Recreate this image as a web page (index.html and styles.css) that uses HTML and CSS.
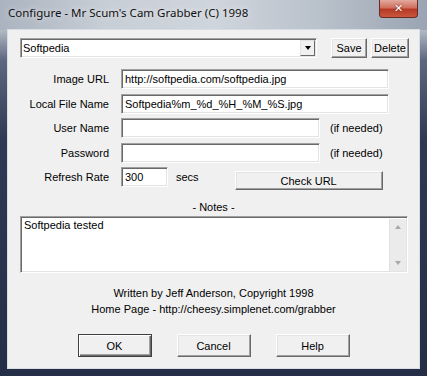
FILE: index.html
```html
<!DOCTYPE html>
<html lang="en">
<head>
    <meta charset="UTF-8">
    <title>Configure - Mr Scum's Cam Grabber (C) 1998</title>
    <link rel="stylesheet" href="styles.css">
</head>
<body>
    <div class="window">
        <!-- Title bar -->
        <div class="titlebar">
            <span class="title">Configure - Mr Scum's Cam Grabber (C) 1998</span>
            <span class="close-button">&#x2715;</span>
        </div>

        <div class="client">
            <!-- Profile selector -->
            <div class="combo-row">
                <div class="combo">
                    <span class="combo-text">Softpedia</span>
                    <span class="combo-drop"><span class="arrow-down"></span></span>
                </div>
                <button class="btn small save">Save</button>
                <button class="btn small delete">Delete</button>
            </div>

            <div class="form">
                <label class="label">Image URL</label>
                <div class="field-cell"><input class="field wide" type="text" value="http://softpedia.com/softpedia.jpg"></div>

                <label class="label">Local File Name</label>
                <div class="field-cell"><input class="field wide" type="text" value="Softpedia%m_%d_%H_%M_%S.jpg"></div>

                <label class="label">User Name</label>
                <div class="field-cell"><input class="field medium" type="text"><span class="hint">(if needed)</span></div>

                <label class="label">Password</label>
                <div class="field-cell"><input class="field medium" type="password"><span class="hint">(if needed)</span></div>

                <label class="label">Refresh Rate</label>
                <div class="field-cell">
                    <input class="field short" type="text" value="300">
                    <span class="secs">secs</span>
                    <button class="btn check">Check URL</button>
                </div>
            </div>

            <div class="notes-label">- Notes -</div>
            <div class="notes">
                <div class="notes-text">Softpedia tested</div>
                <div class="scrollbar">
                    <span class="arrow-up light"></span>
                    <span class="arrow-down light"></span>
                </div>
            </div>

            <div class="credits">
                <p>Written by Jeff Anderson, Copyright 1998</p>
                <p>Home Page - http://cheesy.simplenet.com/grabber</p>
            </div>

            <div class="actions">
                <button class="btn action default">OK</button>
                <button class="btn action">Cancel</button>
                <button class="btn action">Help</button>
            </div>
        </div>
    </div>
</body>
</html>
```

FILE: styles.css
```css
body {
    margin: 0;
    padding: 0;
    width: 427px;
    height: 376px;
    overflow: hidden;
    font-family: "Liberation Sans", Arial, sans-serif;
    font-size: 11px;
    color: black;
}
.window {
    width: 427px;
    height: 376px;
    display: flex;
    flex-direction: column;
    background: linear-gradient(180deg, #c3cad3 0, #b7bfc9 28px, #5d6780 60px, #2f3953 140px, #252e47 100%);
}
.titlebar {
    height: 30px;
    display: flex;
    align-items: flex-start;
    background: linear-gradient(90deg, #aab3bf 0, #c8ced6 25%, #cfd5dc 50%, #b9c1cb 75%, #9aa4b2 100%);
}
.title {
    font-family: "Noto Sans", sans-serif;
    font-size: 11.5px;
    margin: 5px 0 0 8px;
    color: #111;
    text-shadow: 0 0 6px rgba(255, 255, 255, 0.8);
}
.close-button {
    margin-left: auto;
    margin-right: 9px;
    width: 39px;
    height: 18px;
    border: 1px solid #6b2b24;
    border-top: none;
    border-radius: 0 0 4px 4px;
    background: linear-gradient(180deg, #e3a99e 0, #d0705f 45%, #b63a25 55%, #c9563d 100%);
    color: white;
    font-family: "DejaVu Sans", sans-serif;
    font-size: 11px;
    font-weight: bold;
    text-align: center;
    line-height: 17px;
    box-sizing: border-box;
    text-shadow: 0 0 2px #5a1a10;
}
.client {
    margin: 0 8px 8px 8px;
    flex: 1;
    background-color: #f0f0f0;
    box-shadow: 0 0 0 1px #d9dde3;
    display: flex;
    flex-direction: column;
}

/* sunken edit boxes */
.field, .combo, .notes {
    box-sizing: border-box;
    background: white;
    border: 1px solid;
    border-color: #a0a0a0 #ffffff #ffffff #a0a0a0;
    box-shadow: inset 1px 1px 0 #696969, inset -1px -1px 0 #e3e3e3;
}
.field {
    height: 20px;
    padding: 0 2px 0 3px;
    font-family: "Liberation Sans", Arial, sans-serif;
    font-size: 11px;
    outline: none;
}

/* raised buttons */
.btn {
    box-sizing: border-box;
    background: #f0f0f0;
    border: 1px solid;
    border-color: #ffffff #696969 #696969 #ffffff;
    box-shadow: inset -1px -1px 0 #a0a0a0, inset 1px 1px 0 #e3e3e3;
    font-family: "Liberation Sans", Arial, sans-serif;
    font-size: 11px;
    padding: 0;
    color: black;
}
.btn.default {
    border-color: #404040;
    box-shadow: inset 1px 1px 0 #ffffff, inset -1px -1px 0 #696969, inset -2px -2px 0 #a0a0a0;
}

.combo-row {
    display: flex;
    align-items: flex-start;
    margin: 8px 0 0 12px;
    height: 20px;
}
.combo {
    width: 297px;
    height: 20px;
    display: flex;
    align-items: center;
}
.combo-text {
    flex: 1;
    padding-left: 2px;
}
.combo-drop {
    width: 15px;
    height: 16px;
    margin-right: 1px;
    box-sizing: border-box;
    background: #f0f0f0;
    border: 1px solid;
    border-color: #e3e3e3 #696969 #696969 #e3e3e3;
    display: flex;
    align-items: center;
    justify-content: center;
}
.arrow-down, .arrow-up {
    width: 0;
    height: 0;
    border-left: 3.5px solid transparent;
    border-right: 3.5px solid transparent;
}
.arrow-down {
    border-top: 4px solid black;
}
.arrow-up {
    border-bottom: 4px solid black;
}
.arrow-down.light {
    border-top-color: #a8a8a8;
}
.arrow-up.light {
    border-bottom-color: #a8a8a8;
}
.btn.small {
    height: 20px;
}
.save {
    width: 36px;
    margin-left: 14px;
}
.delete {
    width: 38px;
    margin-left: 4px;
}

.form {
    display: grid;
    grid-template-columns: 101px 1fr;
    grid-auto-rows: 20px;
    column-gap: 12px;
    row-gap: 4.5px;
    margin-top: 11px;
}
.label {
    text-align: right;
    line-height: 20px;
}
.field-cell {
    display: flex;
    align-items: flex-start;
}
.wide {
    width: 268px;
}
.medium {
    width: 199px;
}
.short {
    width: 47px;
}
.hint {
    margin-left: 10px;
    line-height: 20px;
}
.secs {
    margin-left: 8px;
    line-height: 20px;
}
.btn.check {
    width: 148px;
    height: 19px;
    margin: 4px 0 0 36px;
}

.notes-label {
    text-align: center;
    line-height: 13px;
    margin-top: 14px;
}
.notes {
    margin: 2px 0 0 12px;
    width: 388px;
    height: 57px;
    display: flex;
}
.notes-text {
    flex: 1;
    padding: 2px 3px;
}
.scrollbar {
    width: 17px;
    margin: 2px 1px 1px 0;
    background: #ebebeb;
    border-left: 1px solid #e0e0e0;
    display: flex;
    flex-direction: column;
    align-items: center;
    justify-content: space-between;
    padding: 6px 0 6px 0;
    box-sizing: border-box;
}

.credits {
    margin-top: 12px;
    text-align: center;
}
.credits p {
    margin: 0;
    line-height: 16px;
}
.actions {
    display: flex;
    justify-content: center;
    gap: 25px;
    margin-top: 17px;
}
.btn.action {
    width: 74px;
    height: 23px;
}
```
